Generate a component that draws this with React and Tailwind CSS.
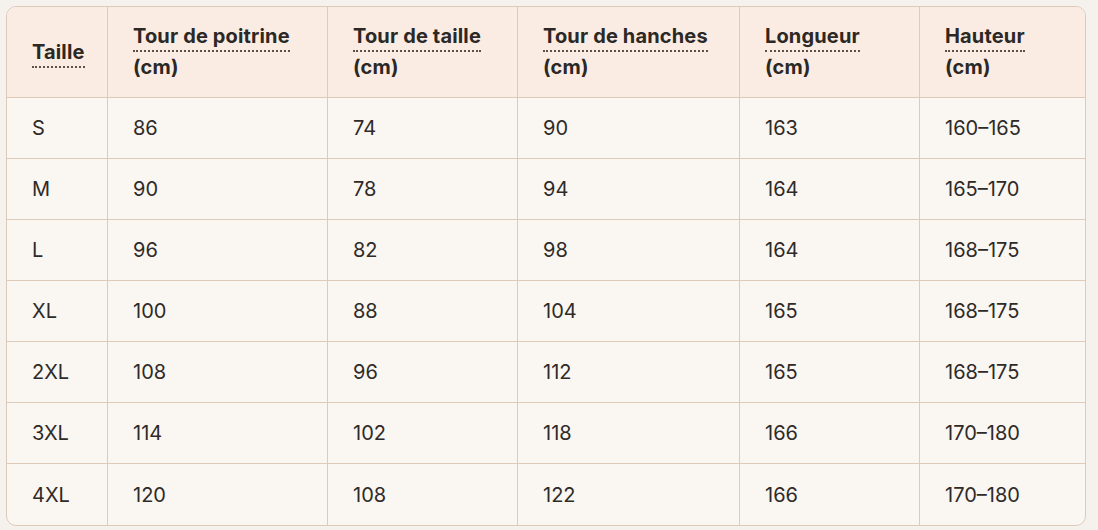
import React from "react";

const headers = [
  { title: "Taille", unit: null },
  { title: "Tour de poitrine", unit: "(cm)" },
  { title: "Tour de taille", unit: "(cm)" },
  { title: "Tour de hanches", unit: "(cm)" },
  { title: "Longueur", unit: "(cm)" },
  { title: "Hauteur", unit: "(cm)" },
];

const rows = [
  ["S", "86", "74", "90", "163", "160–165"],
  ["M", "90", "78", "94", "164", "165–170"],
  ["L", "96", "82", "98", "164", "168–175"],
  ["XL", "100", "88", "104", "165", "168–175"],
  ["2XL", "108", "96", "112", "165", "168–175"],
  ["3XL", "114", "102", "118", "166", "170–180"],
  ["4XL", "120", "108", "122", "166", "170–180"],
];

export default function App() {
  return (
    <div
      className="min-h-[530px] w-full bg-[#f5f1ed] pt-[6px] pl-[6px]"
      style={{ fontFamily: "Inter, 'Noto Sans', sans-serif" }}
    >
      <div className="w-[1080px] overflow-hidden rounded-[10px] border border-[#dfc9b9] bg-[#faf6f2] text-[#2b2825]">
        <div className="grid grid-cols-[101px_220px_190px_222px_180px_1fr]">
          {headers.map((h, i) => (
            <div
              key={h.title}
              className={`flex h-[91px] items-center border-b border-[#dfc9b9] bg-[#fbece3] pl-[25px] text-[20px] leading-[31px] font-bold tracking-[0.15px] ${
                i < 5 ? "border-r" : ""
              }`}
            >
              <div>
                <span className="border-b-2 border-dotted border-[#5b524b] pb-[2px]">{h.title}</span>
                {h.unit && (
                  <>
                    <br />
                    <span>{h.unit}</span>
                  </>
                )}
              </div>
            </div>
          ))}
          {rows.map((r, ri) =>
            r.map((c, ci) => (
              <div
                key={ri + "-" + ci}
                className={`flex h-[61px] items-center pl-[25px] text-[20px] text-[#2e2a27] ${
                  ri < rows.length - 1 ? "border-b border-[#dfc9b9]" : "h-[60px]"
                } ${ci < 5 ? "border-r border-[#dfc9b9]" : ""}`}
              >
                {c}
              </div>
            ))
          )}
        </div>
      </div>
    </div>
  );
}
